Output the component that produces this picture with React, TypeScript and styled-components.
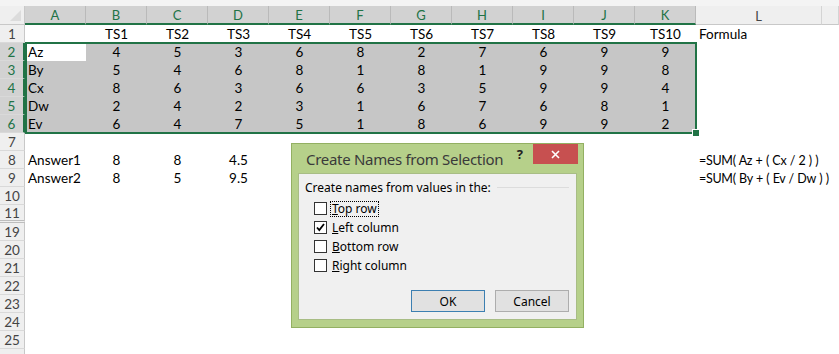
import React from "react";
import styled, { createGlobalStyle } from "styled-components";

const GlobalStyle = createGlobalStyle`
  html, body {
    margin: 0;
    padding: 0;
    background: #ffffff;
    overflow: hidden;
  }
`;

const GREEN = "#217346";
const COLS = ["A", "B", "C", "D", "E", "F", "G", "H", "I", "J", "K", "L", ""];

type Row = { num: number | null; cells: string[]; selected?: boolean };

const rows: Row[] = [
  { num: 1, cells: ["", "TS1", "TS2", "TS3", "TS4", "TS5", "TS6", "TS7", "TS8", "TS9", "TS10", "Formula"] },
  { num: 2, cells: ["Az", "4", "5", "3", "6", "8", "2", "7", "6", "9", "9"], selected: true },
  { num: 3, cells: ["By", "5", "4", "6", "8", "1", "8", "1", "9", "9", "8"], selected: true },
  { num: 4, cells: ["Cx", "8", "6", "3", "6", "6", "3", "5", "9", "9", "4"], selected: true },
  { num: 5, cells: ["Dw", "2", "4", "2", "3", "1", "6", "7", "6", "8", "1"], selected: true },
  { num: 6, cells: ["Ev", "6", "4", "7", "5", "1", "8", "6", "9", "9", "2"], selected: true },
  { num: 7, cells: [] },
  { num: 8, cells: ["Answer1", "8", "8", "4.5", "", "", "", "", "", "", "", "=SUM( Az + ( Cx / 2 ) )"] },
  { num: 9, cells: ["Answer2", "8", "5", "9.5", "", "", "", "", "", "", "", "=SUM( By + ( Ev / Dw ) )"] },
  { num: 10, cells: [] },
  { num: 11, cells: [] },
  { num: 19, cells: [] },
  { num: 20, cells: [] },
  { num: 21, cells: [] },
  { num: 22, cells: [] },
  { num: 23, cells: [] },
  { num: 24, cells: [] },
  { num: 25, cells: [] },
  { num: null, cells: [] },
];

const Page = styled.div`
  position: relative;
  width: 839px;
  height: 354px;
  overflow: hidden;
  background: #fff;
  font-family: Lato, "Liberation Sans", sans-serif;
`;

const TopStrip = styled.div`
  height: 6px;
  background: #f4f4f4;
`;

const Sheet = styled.div`
  position: relative;
  display: grid;
  grid-template-columns: 25px repeat(11, 61px) 126px 1fr;
  grid-auto-rows: 18px;
  grid-template-rows: 19px;
`;

const Corner = styled.div`
  background: #efefef;
  border-right: 1px solid #c8c8c8;
  border-bottom: 1px solid #c8c8c8;
  box-sizing: border-box;
  position: relative;
  &::after {
    content: "";
    position: absolute;
    right: 3px;
    bottom: 3px;
    border-style: solid;
    border-width: 0 0 11px 11px;
    border-color: transparent transparent #dcdcdc transparent;
  }
`;

const ColHead = styled.div<{ $sel: boolean }>`
  box-sizing: border-box;
  display: flex;
  align-items: center;
  justify-content: center;
  background: ${(p) => (p.$sel ? "#d2d2d2" : "#efefef")};
  color: ${(p) => (p.$sel ? GREEN : "#444")};
  border-right: 1px solid ${(p) => (p.$sel ? "#bababa" : "#d4d4d4")};
  border-bottom: ${(p) => (p.$sel ? `2px solid ${GREEN}` : "1px solid #c8c8c8")};
  font-size: 13px;
  padding-top: 1px;
`;

const RowHead = styled.div<{ $sel: boolean; $gap?: boolean }>`
  box-sizing: border-box;
  display: flex;
  align-items: center;
  justify-content: center;
  background: ${(p) => (p.$sel ? "#d2d2d2" : "#efefef")};
  color: ${(p) => (p.$sel ? GREEN : "#444")};
  border-right: ${(p) => (p.$sel ? `2px solid ${GREEN}` : "1px solid #c8c8c8")};
  border-bottom: ${(p) => (p.$gap ? "3px double #bdbdbd" : "1px solid #d9d9d9")};
  font-size: 13.5px;
`;

const Cell = styled.div<{ $sel: boolean; $align: "left" | "center"; $formula?: boolean }>`
  display: flex;
  align-items: center;
  justify-content: ${(p) => (p.$align === "left" ? "flex-start" : "center")};
  padding-left: ${(p) => (p.$align === "left" ? "3px" : "0")};
  background: ${(p) => (p.$sel ? "#c6c6c6" : "#fff")};
  color: #000;
  font-size: ${(p) => (p.$formula ? "12.5px" : "13.5px")};
  letter-spacing: ${(p) => (p.$formula ? "-0.3px" : "0")};
  word-spacing: ${(p) => (p.$formula ? "0.5px" : "0")};
  white-space: nowrap;
  overflow: visible;
  position: relative;
  z-index: ${(p) => (p.$formula ? 1 : 0)};
`;

const Selection = styled.div`
  position: absolute;
  left: 25px;
  top: 36px;
  width: 672px;
  height: 92px;
  border: 2px solid ${GREEN};
  box-sizing: border-box;
  pointer-events: none;
`;

const Handle = styled.div`
  position: absolute;
  right: -5px;
  bottom: -5px;
  width: 6px;
  height: 6px;
  background: ${GREEN};
  border: 1px solid #fff;
`;

const Dialog = styled.div`
  position: absolute;
  left: 291px;
  top: 143px;
  width: 293px;
  height: 185px;
  box-sizing: border-box;
  background: #b6d08a;
  border: 1px solid #93b062;
  display: flex;
  flex-direction: column;
  font-family: "Noto Sans", "Open Sans", sans-serif;
`;

const TitleBar = styled.div`
  height: 29px;
  display: flex;
  align-items: flex-start;
  padding-left: 14px;
`;

const Title = styled.div`
  flex: 1;
  font-size: 15px;
  color: #3a3a3a;
  padding-top: 5px;
  letter-spacing: -0.3px;
`;

const Help = styled.div`
  font-weight: bold;
  font-size: 13px;
  color: #222;
  margin-right: 10px;
  padding-top: 1px;
`;

const Close = styled.div`
  width: 45px;
  height: 20px;
  background: #c75050;
  color: #fff;
  display: flex;
  align-items: center;
  justify-content: center;
  margin-right: 5px;
`;

const Body = styled.div`
  flex: 1;
  margin: 0 6px 7px 6px;
  background: #f0f0f0;
  border: 1px solid #a8bd85;
  display: flex;
  flex-direction: column;
  padding: 5px 7px 7px 6px;
  font-size: 12px;
  color: #000;
`;

const GroupLabel = styled.div`
  display: flex;
  align-items: center;
  gap: 6px;
  &::after {
    content: "";
    flex: 1;
    height: 1px;
    background: #dcdcdc;
  }
`;

const Options = styled.div`
  display: flex;
  flex-direction: column;
  gap: 6px;
  padding: 6px 0 0 9px;
`;

const Option = styled.label`
  display: flex;
  align-items: center;
  gap: 4px;
  height: 13px;
`;

const Box = styled.span`
  width: 11px;
  height: 11px;
  background: #fff;
  border: 1px solid #333;
  display: flex;
  align-items: center;
  justify-content: center;
`;

const OptText = styled.span<{ $focus?: boolean }>`
  outline: ${(p) => (p.$focus ? "1px dotted #000" : "none")};
  padding: 0 1px;
  line-height: 14px;
`;

const Buttons = styled.div`
  margin-top: auto;
  display: flex;
  justify-content: flex-end;
  gap: 10px;
`;

const Button = styled.div<{ $default?: boolean }>`
  width: 74px;
  height: 22px;
  box-sizing: border-box;
  display: flex;
  align-items: center;
  justify-content: center;
  background: #e1e1e1;
  border: 1px solid ${(p) => (p.$default ? "#3c7fb1" : "#adadad")};
`;

const Check = () => (
  <svg width="11" height="11" viewBox="0 0 11 11">
    <path d="M2 5.5 L4.3 8 L9 2" fill="none" stroke="#000" strokeWidth="1.8" />
  </svg>
);

const options = [
  { key: "T", rest: "op row", checked: false, focus: true },
  { key: "L", rest: "eft column", checked: true },
  { key: "B", rest: "ottom row", checked: false },
  { key: "R", rest: "ight column", checked: false },
];

const App = () => {
  return (
    <Page>
      <GlobalStyle />
      <TopStrip />
      <Sheet>
        <Corner />
        {COLS.map((c, i) => (
          <ColHead key={i} $sel={i < 11}>
            {c}
          </ColHead>
        ))}
        {rows.map((row, r) => (
          <React.Fragment key={r}>
            <RowHead $sel={!!row.selected} $gap={row.num === 11}>
              {row.num}
            </RowHead>
            {COLS.map((_, i) => {
              const text = row.cells[i] || "";
              const sel = !!row.selected && i < 11 && !(row.num === 2 && i === 0);
              const align = i === 0 || i === 11 ? "left" : "center";
              const formula = text.startsWith("=");
              return (
                <Cell key={i} $sel={sel} $align={align} $formula={formula}>
                  {text}
                </Cell>
              );
            })}
          </React.Fragment>
        ))}
        <Selection>
          <Handle />
        </Selection>
      </Sheet>
      <Dialog>
        <TitleBar>
          <Title>Create Names from Selection</Title>
          <Help>?</Help>
          <Close>
            <svg width="9" height="9" viewBox="0 0 9 9">
              <path d="M1 1 L8 8 M8 1 L1 8" stroke="#fff" strokeWidth="1.6" />
            </svg>
          </Close>
        </TitleBar>
        <Body>
          <GroupLabel>Create names from values in the:</GroupLabel>
          <Options>
            {options.map((o) => (
              <Option key={o.key}>
                <Box>{o.checked && <Check />}</Box>
                <OptText $focus={o.focus}>
                  <u>{o.key}</u>
                  {o.rest}
                </OptText>
              </Option>
            ))}
          </Options>
          <Buttons>
            <Button $default>OK</Button>
            <Button>Cancel</Button>
          </Buttons>
        </Body>
      </Dialog>
    </Page>
  );
};

export default App;
